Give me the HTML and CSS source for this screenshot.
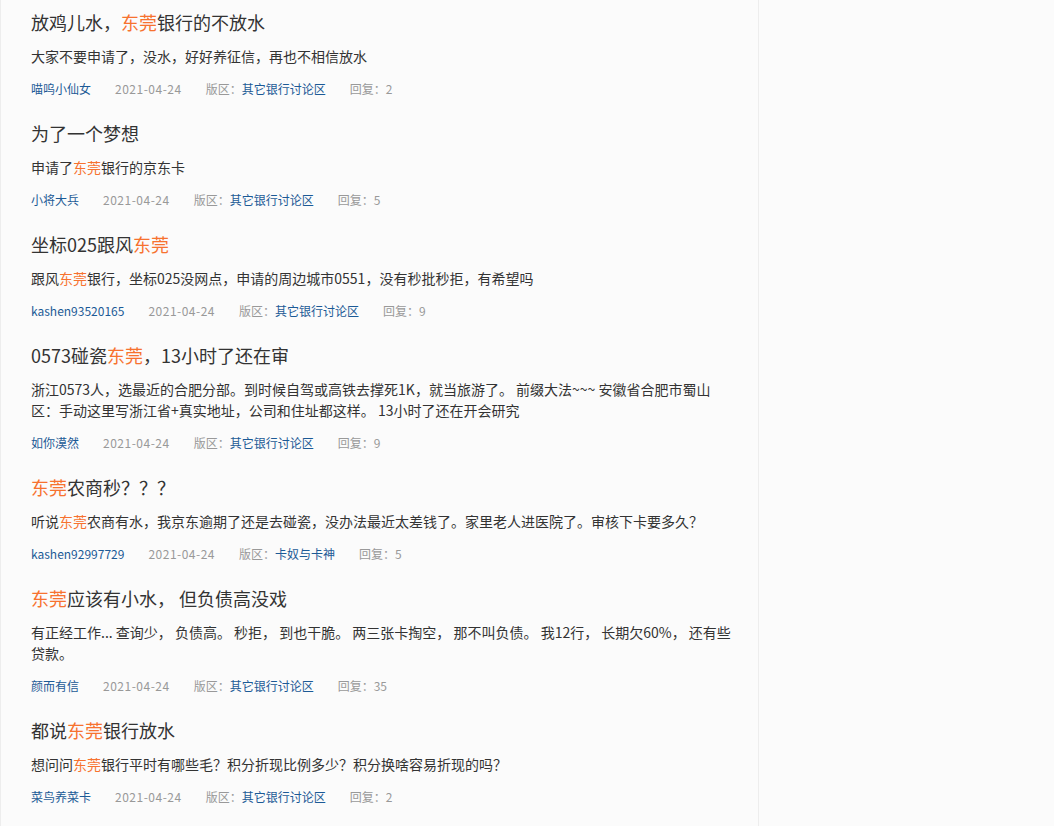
FILE: index.html
```html
<!DOCTYPE html>
<html lang="zh-CN">
<head>
    <meta charset="UTF-8">
    <meta name="viewport" content="width=device-width, initial-scale=1.0">
    <title>东莞银行 - 搜索结果</title>
    <link rel="stylesheet" href="styles.css">
</head>
<body>
    <div class="list">
        <div class="post">
            <h3 class="post-title">放鸡儿水，<em>东莞</em>银行的不放水</h3>
            <p class="post-body">大家不要申请了，没水，好好养征信，再也不相信放水</p>
            <div class="meta">
                <a class="author" href="#">喵呜小仙女</a>
                <span class="date">2021-04-24</span>
                <span class="board">版区：<a href="#">其它银行讨论区</a></span>
                <span class="replies">回复：2</span>
            </div>
        </div>
        <div class="post">
            <h3 class="post-title">为了一个梦想</h3>
            <p class="post-body">申请了<em>东莞</em>银行的京东卡</p>
            <div class="meta">
                <a class="author" href="#">小将大兵</a>
                <span class="date">2021-04-24</span>
                <span class="board">版区：<a href="#">其它银行讨论区</a></span>
                <span class="replies">回复：5</span>
            </div>
        </div>
        <div class="post">
            <h3 class="post-title">坐标025跟风<em>东莞</em></h3>
            <p class="post-body">跟风<em>东莞</em>银行，坐标025没网点，申请的周边城市0551，没有秒批秒拒，有希望吗</p>
            <div class="meta">
                <a class="author" href="#">kashen93520165</a>
                <span class="date">2021-04-24</span>
                <span class="board">版区：<a href="#">其它银行讨论区</a></span>
                <span class="replies">回复：9</span>
            </div>
        </div>
        <div class="post">
            <h3 class="post-title">0573碰瓷<em>东莞</em>，13小时了还在审</h3>
            <p class="post-body">浙江0573人，选最近的合肥分部。到时候自驾或高铁去撑死1K，就当旅游了。 前缀大法~~~ 安徽省合肥市蜀山区：手动这里写浙江省+真实地址，公司和住址都这样。 13小时了还在开会研究</p>
            <div class="meta">
                <a class="author" href="#">如你漠然</a>
                <span class="date">2021-04-24</span>
                <span class="board">版区：<a href="#">其它银行讨论区</a></span>
                <span class="replies">回复：9</span>
            </div>
        </div>
        <div class="post">
            <h3 class="post-title"><em>东莞</em>农商秒？？？</h3>
            <p class="post-body">听说<em>东莞</em>农商有水，我京东逾期了还是去碰瓷，没办法最近太差钱了。家里老人进医院了。审核下卡要多久？</p>
            <div class="meta">
                <a class="author" href="#">kashen92997729</a>
                <span class="date">2021-04-24</span>
                <span class="board">版区：<a href="#">卡奴与卡神</a></span>
                <span class="replies">回复：5</span>
            </div>
        </div>
        <div class="post">
            <h3 class="post-title"><em>东莞</em>应该有小水， 但负债高没戏</h3>
            <p class="post-body">有正经工作... 查询少， 负债高。 秒拒， 到也干脆。 两三张卡掏空， 那不叫负债。 我12行， 长期欠60%， 还有些贷款。</p>
            <div class="meta">
                <a class="author" href="#">颜而有信</a>
                <span class="date">2021-04-24</span>
                <span class="board">版区：<a href="#">其它银行讨论区</a></span>
                <span class="replies">回复：35</span>
            </div>
        </div>
        <div class="post">
            <h3 class="post-title">都说<em>东莞</em>银行放水</h3>
            <p class="post-body">想问问<em>东莞</em>银行平时有哪些毛？积分折现比例多少？积分换啥容易折现的吗？</p>
            <div class="meta">
                <a class="author" href="#">菜鸟养菜卡</a>
                <span class="date">2021-04-24</span>
                <span class="board">版区：<a href="#">其它银行讨论区</a></span>
                <span class="replies">回复：2</span>
            </div>
        </div>
    </div>
</body>
</html>
```

FILE: styles.css
```css
html, body {
    margin: 0;
    padding: 0;
    background: #fbfbfb;
    font-family: "Noto Sans CJK SC", "Microsoft YaHei", sans-serif;
    color: #333;
}
.list {
    box-sizing: border-box;
    width: 759px;
    min-height: 100vh;
    padding: 0 24px 0 30px;
    border-left: 1px solid #ededed;
    border-right: 1px solid #ededed;
}
.post {
    padding: 10px 0 12px;
}
.post-title {
    margin: 0;
    font-size: 18px;
    font-weight: normal;
    line-height: 24px;
    color: #333;
}
.post em {
    font-style: normal;
    color: #f7722f;
}
.post-body {
    margin: 12px 0;
    font-size: 14px;
    line-height: 21px;
    color: #333;
}
.meta {
    display: flex;
    gap: 24px;
    font-size: 12px;
    line-height: 20px;
    color: #999;
}
.meta .date {
    letter-spacing: 0.5px;
}
.meta a {
    color: #1c5a96;
    text-decoration: none;
}
```
